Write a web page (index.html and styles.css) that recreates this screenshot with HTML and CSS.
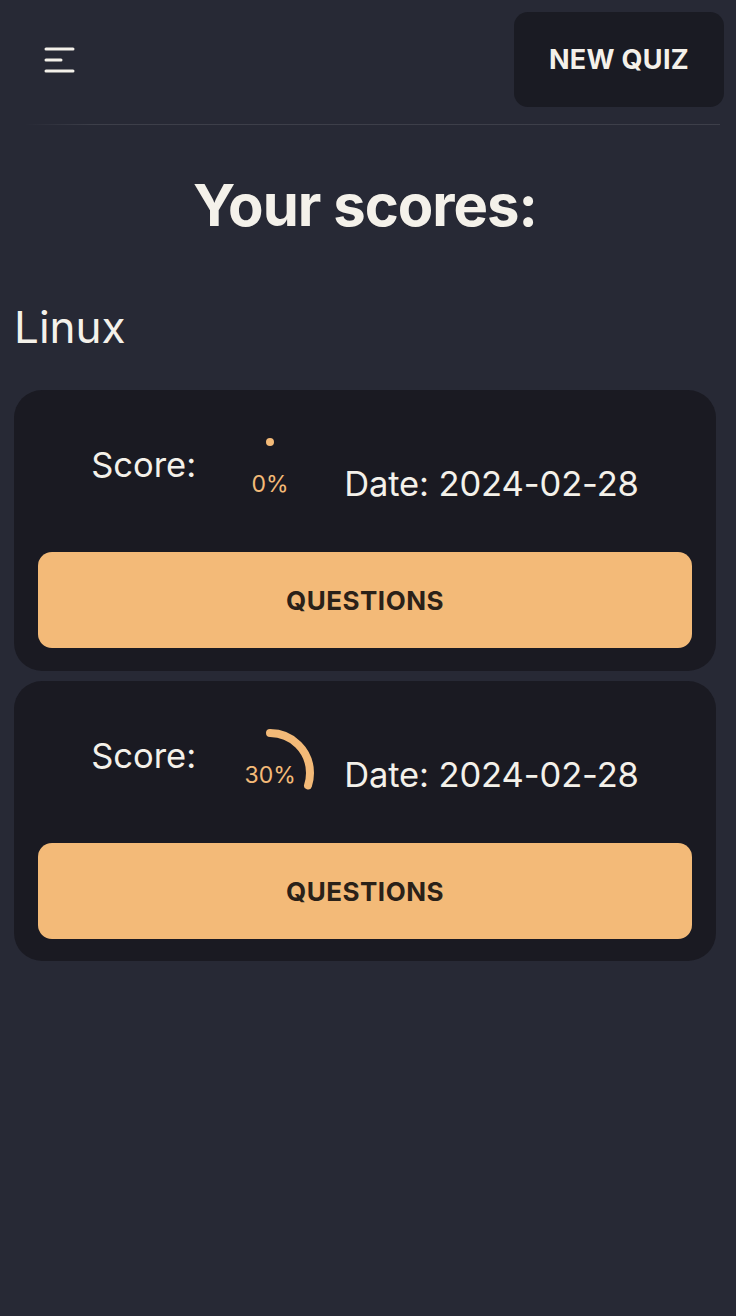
FILE: index.html
```html
<!DOCTYPE html>
<html lang="en">
<head>
<meta charset="utf-8">
<title>Your scores</title>
<link rel="stylesheet" href="styles.css">
</head>
<body>
<header class="topbar">
  <button class="menu-btn" aria-label="Menu">
    <svg width="32" height="26" viewBox="0 0 32 26"><g stroke="#f4f1ea" stroke-width="3" stroke-linecap="round"><line x1="2" y1="2" x2="29" y2="2"/><line x1="2" y1="13" x2="17" y2="13"/><line x1="2" y1="24" x2="29" y2="24"/></g></svg>
  </button>
  <button class="new-quiz">NEW QUIZ</button>
</header>
<div class="divider"></div>
<main class="content">
  <h1 class="title">Your scores:</h1>
  <h2 class="topic">Linux</h2>
  <section class="card">
    <div class="row">
      <span class="label">Score:</span>
      <div class="ring">
        <svg width="88" height="88" viewBox="0 0 88 88"><circle cx="44" cy="44" r="40" fill="none" stroke="#f3ba78" stroke-width="8" stroke-linecap="round" stroke-dasharray="0.01 300" transform="rotate(-90 44 44)"/></svg>
        <span class="pct">0%</span>
      </div>
      <span class="date">Date: 2024-02-28</span>
    </div>
    <button class="questions">QUESTIONS</button>
  </section>
  <section class="card">
    <div class="row">
      <span class="label">Score:</span>
      <div class="ring">
        <svg width="88" height="88" viewBox="0 0 88 88"><circle cx="44" cy="44" r="40" fill="none" stroke="#f3ba78" stroke-width="8" stroke-linecap="round" stroke-dasharray="75.4 300" transform="rotate(-90 44 44)"/></svg>
        <span class="pct">30%</span>
      </div>
      <span class="date">Date: 2024-02-28</span>
    </div>
    <button class="questions">QUESTIONS</button>
  </section>
</main>
</body>
</html>
```
FILE: styles.css
```css
* { box-sizing: border-box; }
html, body { margin: 0; padding: 0; }
body {
  background: #272935;
  color: #f4f1ea;
  font-family: Inter, "Noto Sans", "Liberation Sans", sans-serif;
  width: 736px;
  min-height: 1316px;
}
button { font-family: inherit; cursor: pointer; }
.topbar {
  display: flex;
  justify-content: space-between;
  align-items: flex-start;
  padding: 12px 12px 0 44px;
  height: 124px;
}
.menu-btn {
  background: none;
  border: none;
  padding: 0;
  margin-top: 35px;
  width: 32px;
  height: 26px;
  display: block;
}
.menu-btn svg { display: block; }
.new-quiz {
  width: 210px;
  height: 95px;
  background: #1a1b23;
  color: #f4f1ea;
  border: none;
  border-radius: 14px;
  font-size: 27px;
  font-weight: 700;
  letter-spacing: 0.3px;
}
.divider {
  height: 1px;
  margin: 0 16px 0 24px;
  background: linear-gradient(90deg, rgba(255,255,255,0) 0%, rgba(255,255,255,0.1) 10%, rgba(255,255,255,0.1) 100%);
}
.content { padding: 0 20px 0 14px; }
.title {
  margin: 44px 0 0;
  text-align: center;
  font-size: 58px;
  font-weight: 700;
  letter-spacing: -1px;
  line-height: 72px;
}
.topic {
  margin: 58px 0 0;
  font-size: 44px;
  font-weight: 400;
  line-height: 56px;
}
.card {
  background: #1a1a22;
  border-radius: 28px;
  padding: 24px;
  height: 281px;
  margin-top: 35px;
  width: 702px;
}
.card + .card { margin-top: 10px; height: 280px; }
.row {
  display: flex;
  align-items: center;
  justify-content: center;
  gap: 30px;
  height: 138px;
  padding-top: 24px;
  padding-bottom: 26px;
}
.label {
  font-size: 34.5px;
  line-height: 42px;
  margin-bottom: 34px;
}
.ring {
  position: relative;
  width: 88px;
  height: 88px;
  flex: none;
}
.ring svg { display: block; }
.pct {
  position: absolute;
  inset: 0;
  display: flex;
  align-items: center;
  justify-content: center;
  color: #f3ba78;
  font-size: 23px;
  padding-top: 4px;
}
.date {
  font-size: 34.5px;
  line-height: 42px;
  padding-top: 4px;
  letter-spacing: -0.1px;
}
.questions {
  display: block;
  width: 100%;
  height: 96px;
  border: none;
  border-radius: 14px;
  background: #f3ba78;
  color: #2a2118;
  font-size: 26px;
  font-weight: 700;
  letter-spacing: 0.5px;
}
```
